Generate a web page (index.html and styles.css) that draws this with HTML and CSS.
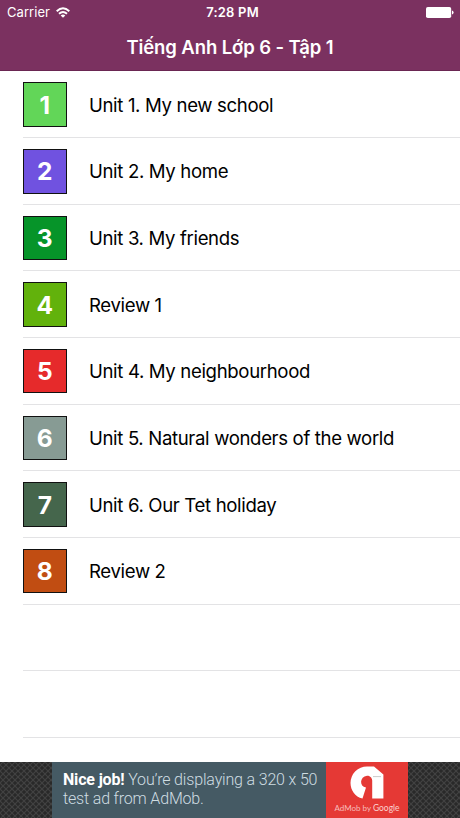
FILE: index.html
```html
<!DOCTYPE html>
<html lang="vi">
<head>
<meta charset="utf-8">
<title>Tiếng Anh Lớp 6 - Tập 1</title>
<link rel="stylesheet" href="styles.css">
</head>
<body>
<div class="screen">
  <header class="header">
    <div class="status">
      <div class="carrier"><span class="carrier-name">Carrier</span>
        <svg class="wifi" width="14" height="11" viewBox="0 0 14 11" fill="none" stroke="#fff" stroke-width="1.9"><path d="M.7 4.2Q7-1.8 13.3 4.2M3 6.8Q7 3 11 6.8"/><path d="M4.7 8.4Q7 6.4 9.3 8.4L7 10.8Z" fill="#fff" stroke="none"/></svg>
      </div>
      <div class="time">7:28 PM</div>
      <svg class="battery" width="28" height="11" viewBox="0 0 28 11" fill="#fff"><rect width="25.2" height="11" rx="1.8"/><path d="M26 3.5Q27.6 4.2 27.6 5.5T26 7.5Z"/></svg>
    </div>
    <h1 class="title">Tiếng Anh Lớp 6 - Tập 1</h1>
  </header>
  <ul class="list">
    <li class="row"><span class="tile green">1</span><span class="label">Unit 1. My new school</span></li>
    <li class="row"><span class="tile violet">2</span><span class="label">Unit 2. My home</span></li>
    <li class="row"><span class="tile forest">3</span><span class="label">Unit 3. My friends</span></li>
    <li class="row"><span class="tile lime">4</span><span class="label">Review 1</span></li>
    <li class="row"><span class="tile red">5</span><span class="label">Unit 4. My neighbourhood</span></li>
    <li class="row"><span class="tile grey">6</span><span class="label">Unit 5. Natural wonders of the world</span></li>
    <li class="row"><span class="tile pine">7</span><span class="label">Unit 6. Our Tet holiday</span></li>
    <li class="row"><span class="tile rust">8</span><span class="label">Review 2</span></li>
    <li class="row"></li>
    <li class="row"></li>
  </ul>
  <footer class="ad">
    <div class="ad-text"><p><b>Nice job!</b> You’re displaying a 320 x 50</p><p>test ad from AdMob.</p></div>
    <div class="ad-logo">
      <svg width="34" height="33" viewBox="0 0 34 33"><path d="M12.5 32.5C5 31 .5 24 .5 17A16.5 16.5 0 0 1 17 .5H24L33.4 8.5V32.5H22.2V14.5C22 11 19 9.5 17 9.8C9.5 10.8 9.2 20.5 16 21.6L12.5 32.5Z" fill="#fff"/><path d="M23 10.6H31" stroke="#ccc"/></svg>
      <div class="ad-brand">AdMob by <span>Google</span></div>
    </div>
  </footer>
</div>
</body>
</html>
```
FILE: styles.css
```css
* { box-sizing: border-box; margin: 0; padding: 0; }
body { background: #fff; font-family: Inter, "Liberation Sans", sans-serif; color: #000; }
.screen { display: flex; flex-direction: column; width: 460px; height: 818px; overflow: hidden; }
.header { height: 71px; flex: none; background: #7b3160; color: #fff; border-bottom: 1px solid #6a2652; }
.status { display: grid; grid-template-columns: 1fr auto 1fr; align-items: center; height: 24px; padding: 0 6px 0 7px; font-size: 13px; line-height: 24px; }
.carrier { display: flex; align-items: center; gap: 6px; }
.carrier-name { letter-spacing: 0.05px; }
.time { padding-left: 4px; font-weight: 600; letter-spacing: 0.2px; }
.battery { justify-self: end; }
.title { font-size: 18.5px; font-weight: 600; line-height: 46px; text-align: center; letter-spacing: -0.1px; }
.list { list-style: none; height: 691px; flex: none; padding-top: 0.4px; }
.row { display: flex; align-items: center; gap: 22px; height: 66.67px; margin-left: 22.5px; border-bottom: 1px solid #e3e3e5; }
.tile { display: flex; align-items: center; justify-content: center; width: 44.5px; height: 44.5px; border: 1px solid #111; color: #fff; font-size: 24.5px; font-weight: 700; position: relative; top: 0.4px; }
.label { padding-top: 1px; font-size: 18.6px; line-height: 24px; letter-spacing: -0.35px; white-space: nowrap; }
.green { background: #62d658; }
.violet { background: #7052e0; }
.forest { background: #069429; }
.lime { background: #62b20c; }
.red { background: #e62a2b; }
.grey { background: #879b94; }
.pine { background: #45664c; }
.rust { background: #c14d12; }
.ad { display: flex; height: 56px; padding: 0 52px; background: radial-gradient(circle, #292929 1.4px, transparent 2px) 0 0 / 6px 6px, radial-gradient(circle, #292929 1.4px, transparent 2px) 3px 3px / 6px 6px, #414141; }
.ad-text { width: 274px; padding: 8px 0 0 11px; background: #455a64; color: #cfdde2; font: 300 16px/19px Roboto, sans-serif; letter-spacing: -0.17px; white-space: nowrap; }
.ad-text b { color: #fff; font-weight: 700; }
.ad-logo { display: flex; flex-direction: column; align-items: center; width: 82px; padding-top: 4px; background: #e53935; }
.ad-brand { color: #f8bdbb; font: 8px/18px Lato, sans-serif; white-space: nowrap; }
.ad-brand span { color: #fbd2d0; font-size: 8.5px; }
```
